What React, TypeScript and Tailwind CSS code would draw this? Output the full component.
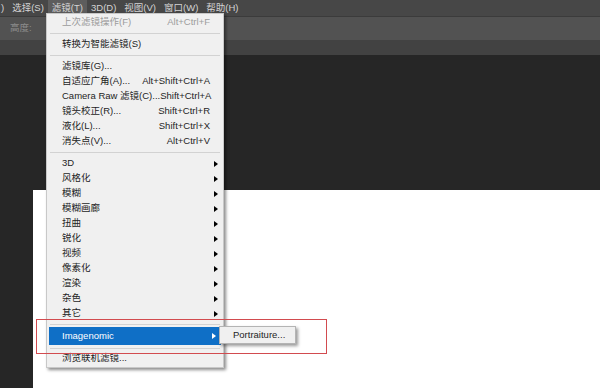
import { ReactNode } from 'react';

const font = { fontFamily: '"Liberation Sans", "Noto Sans CJK SC", sans-serif' };

type Item = { label: string; shortcut?: string; sub?: boolean; disabled?: boolean };

const groups: Item[][] = [
  [{ label: '上次滤镜操作(F)', shortcut: 'Alt+Ctrl+F', disabled: true }],
  [{ label: '转换为智能滤镜(S)' }],
  [
    { label: '滤镜库(G)...' },
    { label: '自适应广角(A)...', shortcut: 'Alt+Shift+Ctrl+A' },
    { label: 'Camera Raw 滤镜(C)...', shortcut: 'Shift+Ctrl+A' },
    { label: '镜头校正(R)...', shortcut: 'Shift+Ctrl+R' },
    { label: '液化(L)...', shortcut: 'Shift+Ctrl+X' },
    { label: '消失点(V)...', shortcut: 'Alt+Ctrl+V' },
  ],
  [
    { label: '3D', sub: true },
    { label: '风格化', sub: true },
    { label: '模糊', sub: true },
    { label: '模糊画廊', sub: true },
    { label: '扭曲', sub: true },
    { label: '锐化', sub: true },
    { label: '视频', sub: true },
    { label: '像素化', sub: true },
    { label: '渲染', sub: true },
    { label: '杂色', sub: true },
    { label: '其它', sub: true },
  ],
];

function Arrow({ white }: { white?: boolean }) {
  return (
    <span
      className={`absolute right-[5px] top-1/2 -translate-y-1/2 w-0 h-0 border-y-[3.5px] border-y-transparent border-l-[4px] ${
        white ? 'border-l-white' : 'border-l-black'
      }`}
    />
  );
}

function Row({ item }: { item: Item }) {
  return (
    <div
      className={`relative flex items-center h-[15px] pl-[15px] pr-[13px] ${
        item.disabled ? 'text-[#9c9c9c]' : 'text-[#1e1e1e]'
      }`}
    >
      <span className="flex-1 whitespace-nowrap">{item.label}</span>
      {item.shortcut && <span className="whitespace-nowrap">{item.shortcut}</span>}
      {item.sub && <Arrow />}
    </div>
  );
}

function Sep({ h = 'h-[7px]' }: { h?: string }) {
  return (
    <div className={`${h} flex items-center px-[3px]`}>
      <div className="h-px w-full bg-[#d2d2d2]" />
    </div>
  );
}

function MenuBarItem({ children, active }: { children: ReactNode; active?: boolean }) {
  return (
    <span className={`px-[4px] h-full flex items-center whitespace-nowrap ${active ? 'bg-[#5d5d5d]' : ''}`}>
      {children}
    </span>
  );
}

export default function App() {
  return (
    <div className="relative w-[600px] h-[388px] overflow-hidden bg-[#262626] text-[9.5px]" style={font}>
      {/* menu bar */}
      <div className="h-[16px] bg-[#474747] flex items-center text-[#d4d4d4] -ml-[3px]">
        <MenuBarItem>)</MenuBarItem>
        <MenuBarItem>选择(S)</MenuBarItem>
        <MenuBarItem active>滤镜(T)</MenuBarItem>
        <MenuBarItem>3D(D)</MenuBarItem>
        <MenuBarItem>视图(V)</MenuBarItem>
        <MenuBarItem>窗口(W)</MenuBarItem>
        <MenuBarItem>帮助(H)</MenuBarItem>
      </div>
      {/* options bar */}
      <div className="h-[24px] bg-[#525252] border-t border-[#3b3b3b] flex items-center pl-[10px]">
        <span className="text-[#8c8c8c]">高度:</span>
      </div>
      {/* tab strip */}
      <div className="h-[15px] bg-[#424242]" />
      {/* canvas */}
      <div className="pt-[135px] pl-[33px] h-[333px]">
        <div className="bg-white h-full" />
      </div>

      {/* filter menu */}
      <div className="absolute left-[46px] top-[13px] w-[178px] bg-[#f0f0f0] border border-[#c8c8c8] shadow-[2px_2px_3px_rgba(0,0,0,0.45)] pt-[1px] pb-[1px]">
        {groups.map((g, i) => (
          <div key={i}>
            {i > 0 && <Sep />}
            {g.map((it) => (
              <Row key={it.label} item={it} />
            ))}
          </div>
        ))}
        <Sep h="h-[6px]" />
        <div className="relative mx-[2px] h-[18px] bg-[#0f6fc6] text-white flex items-center pl-[13px]">
          Imagenomic
          <Arrow white />
        </div>
        <Sep h="h-[6px]" />
        <Row item={{ label: '浏览联机滤镜...' }} />
      </div>

      {/* submenu */}
      <div className="absolute left-[219px] top-[326px] w-[77px] h-[18px] bg-[#f0f0f0] border border-[#b4b4b4] shadow-[2px_2px_3px_rgba(0,0,0,0.4)] flex items-center pl-[13px] text-[#1e1e1e] whitespace-nowrap">
        Portraiture...
      </div>

      {/* highlight frame */}
      <div className="absolute left-[36px] top-[319px] w-[291px] h-[35px] border-[1.5px] border-[#d24b4f] pointer-events-none" />
    </div>
  );
}
